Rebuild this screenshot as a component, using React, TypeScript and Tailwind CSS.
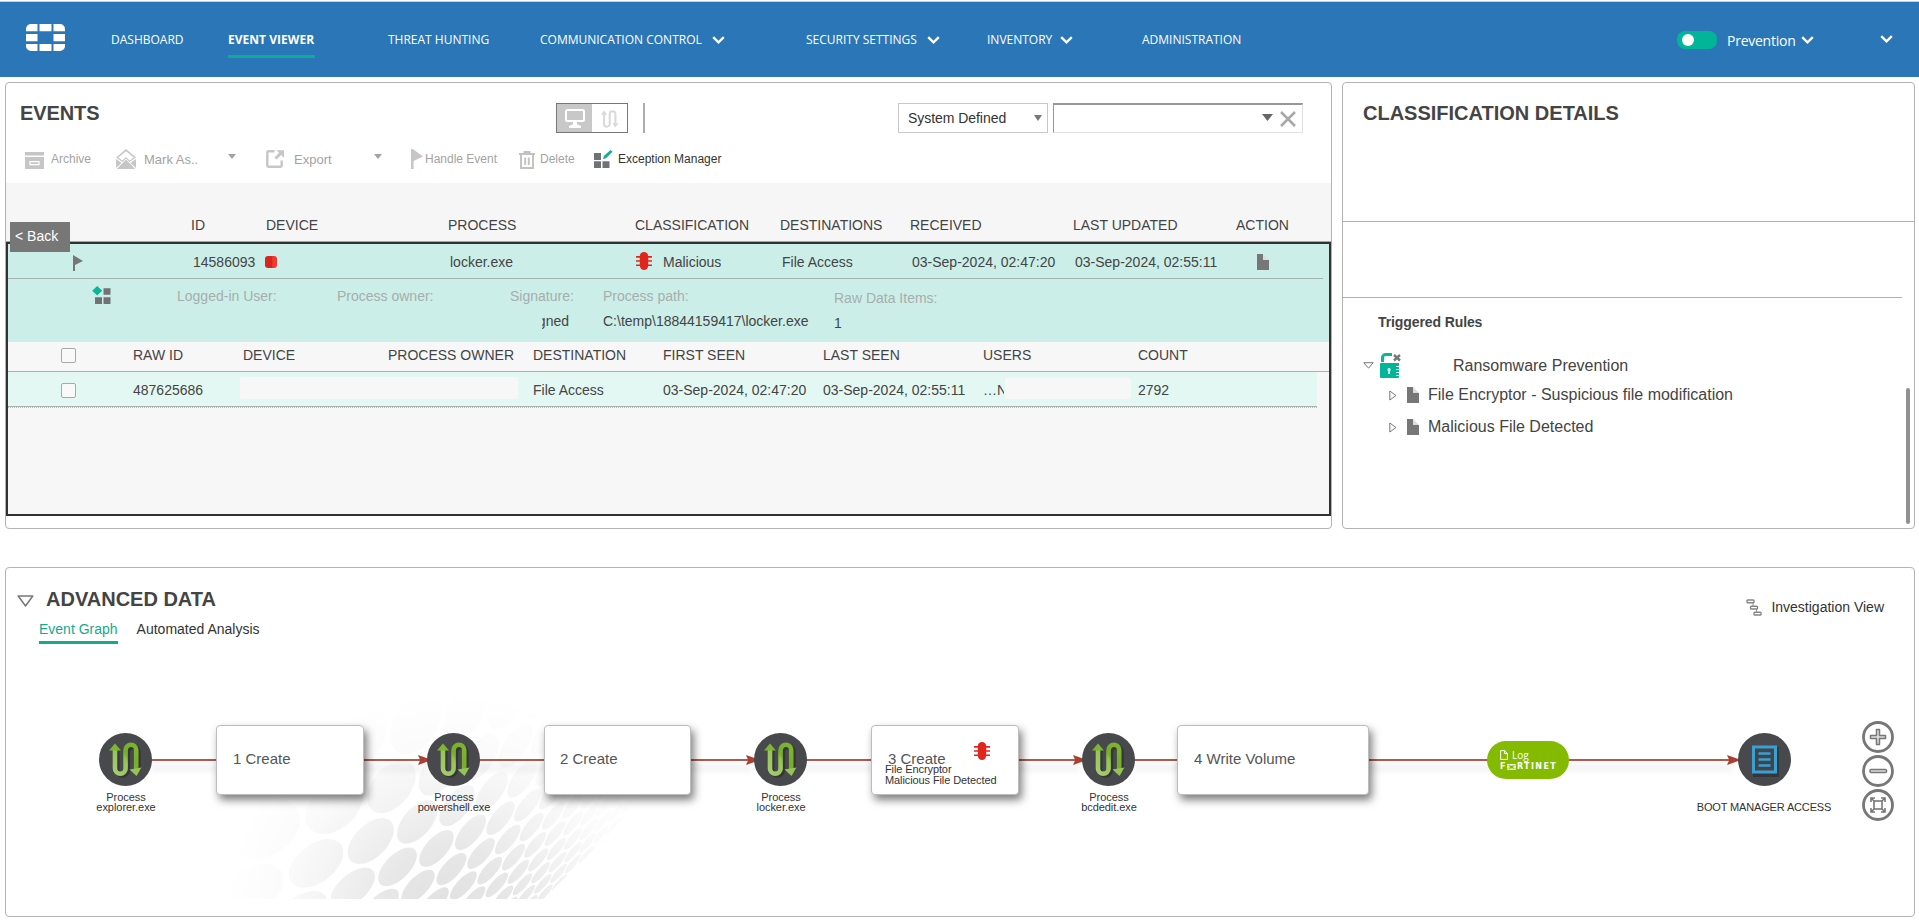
import React from "react";

const SANS = "font-['Liberation_Sans',sans-serif]";
const NAV = "font-['Open_Sans',sans-serif]";

function Logo({ className }: { className?: string }) {
  return (
    <svg viewBox="0 0 39 27" className={className} fill="currentColor" preserveAspectRatio="none">
      <path d="M5 0h6.500v7.300H0V5a5 5 0 0 1 5-5zM13.500 0h12v7.300h-12zM27.500 0H34a5 5 0 0 1 5 5v2.300H27.500zM0 10h11.500v7.300H0zM27.500 10H39v7.300H27.500zM0 20h11.500v7H5a5 5 0 0 1-5-5zM13.500 20h12v7h-12zM27.500 20H39v2a5 5 0 0 1-5 5h-6.500z" />
    </svg>
  );
}

function Chevron({ className = "h-[8px] w-[13px]" }: { className?: string }) {
  return (
    <svg viewBox="0 0 13 8" className={className} fill="none" stroke="#fff" strokeWidth="2.4">
      <path d="M1.2 1.2 6.5 6.3 11.8 1.2" />
    </svg>
  );
}

function Bug() {
  return (
    <svg viewBox="0 0 16 18" className="h-[18px] w-[16px]" fill="#e0261c">
      <rect x="3.8" y="0" width="8.4" height="18" rx="4.2" />
      <path d="M0 4h16v1.7H0zM0 8.2h16v1.6H0zM0 12.4h16v1.7H0z" />
    </svg>
  );
}

function Doc({ className = "h-[16px] w-[12px]" }: { className?: string }) {
  return (
    <svg viewBox="0 0 12 16" className={className}>
      <path d="M6 0 12 6H6z" fill="#dcdcdc" />
      <path d="M0 0h6v6h6v10H0z" fill="#777" />
    </svg>
  );
}

function CaretDown({ className }: { className?: string }) {
  return (
    <svg viewBox="0 0 8 6" className={className} fill="currentColor" preserveAspectRatio="none">
      <path d="M0 0h8L4 6z" />
    </svg>
  );
}

function Flow({ className, stroke = "#dadada" }: { className?: string; stroke?: string }) {
  return (
    <svg viewBox="9 9 35 35" className={className} preserveAspectRatio="none">
      <path d="M15 15V36a5.3 5.3 0 0 0 11 0V17a5.3 5.3 0 0 1 11 0V36" fill="none" stroke={stroke} strokeWidth="4" />
      <path d="M9 18 15 10 21 18zM31 35h12L37 43z" fill={stroke} />
    </svg>
  );
}

function NavItem({ label, chevron, ml }: { label: string; chevron?: boolean; ml?: string }) {
  return (
    <div className="flex items-center">
      <span className="whitespace-nowrap">{label}</span>
      {chevron && (
        <span className={ml}>
          <Chevron />
        </span>
      )}
    </div>
  );
}

function Header() {
  return (
    <header className={`h-[77px] border-t border-white ${NAV}`}>
      <div className="grid h-[76px] grid-cols-[26px_85px_117px_160px_152px_266px_181px_155px_535px_50px_153px_39px] items-center border-t border-[#bcd0e4] bg-[#2b76b7] text-[12px] text-white">
        <span />
        <Logo className="mb-[4px] h-[27px] w-[39px]" />
        <NavItem label="DASHBOARD" />
        <div className="relative flex h-full items-center font-bold">
          <span className="text-[12px] tracking-[0.03px] whitespace-nowrap">EVENT VIEWER</span>
          <span className="absolute top-[53px] left-0 h-[3px] w-[87px] bg-[#0bae94]" />
        </div>
        <NavItem label="THREAT HUNTING" />
        <NavItem label="COMMUNICATION CONTROL" chevron ml="ml-[10px]" />
        <NavItem label="SECURITY SETTINGS" chevron ml="ml-[10px]" />
        <NavItem label="INVENTORY" chevron ml="ml-[8px]" />
        <NavItem label="ADMINISTRATION" />
        <div className="flex h-[18px] w-[40px] items-center rounded-[8px] bg-[#02b598] pl-[5px]">
          <span className="size-[12px] rounded-full bg-white" />
        </div>
        <div className="flex items-center pt-[1px]">
          <span className="text-[14px] tracking-[-0.25px]">Prevention</span>
          <Chevron className="ml-[6px] h-[8px] w-[13px]" />
        </div>
        <Chevron className="mb-[2px] h-[8px] w-[13px]" />
      </div>
    </header>
  );
}

function Toolbar() {
  return (
    <div className="grid h-[50px] grid-cols-[18px_27px_65px_28px_84px_38px_28px_80px_37px_14px_94px_21px_54px_24px_auto] items-center pt-[2px] text-[12px] whitespace-nowrap text-[#a3a3a3]">
      <span />
      <svg viewBox="0 0 19 17" className="mt-[3px] ml-[1px] h-[17px] w-[19px]" fill="#c6c6c6">
        <path d="M0 0h19v3.5H0zM0 5h19v12H0z" />
        <path d="M5 9.7h9v3H5z" fill="none" stroke="#fff" strokeWidth="1.2" />
      </svg>
      <span>Archive</span>
      <svg viewBox="0 0 20 20" className="mb-[1px] h-[20px] w-[20px]">
        <path d="M0 8.500 10 0l10 8.500L13.500 13 10 9.500 6.500 13z" fill="#c6c6c6" />
        <path d="M2.200 8.600 10 2.200l7.800 6.400-4.200 3L10 8l-3.600 3.600z" fill="#fff" />
        <path d="M0 10 5.600 14 0 19zM20 10 14.400 14 20 19zM.8 20 10 10.500 19.200 20z" fill="#c6c6c6" />
      </svg>
      <span className="pt-[1px] text-[13px]">Mark As..</span>
      <CaretDown className="mb-[5px] h-[5px] w-[8px]" />
      <svg viewBox="0 0 18 18" className="h-[18px] w-[18px]" fill="none" stroke="#c6c6c6">
        <path d="M8.500 1.300H2.500a1.200 1.200 0 0 0-1.200 1.200v13a1.200 1.200 0 0 0 1.200 1.200h12a1.200 1.200 0 0 0 1.200-1.200V10.500" strokeWidth="2.4" />
        <path d="M9.500 8.500 14.500 3.500" strokeWidth="3" />
        <path d="M10.500.3H18V8z" fill="#c6c6c6" stroke="none" />
      </svg>
      <span className="pt-[1px] text-[13px]">Export</span>
      <CaretDown className="mb-[5px] h-[5px] w-[8px]" />
      <svg viewBox="0 0 12 20" className="mb-[1px] h-[20px] w-[12px]" fill="#c6c6c6">
        <path d="M0 0h1.8L12 7.5 2.6 12V20H0z" />
      </svg>
      <span>Handle Event</span>
      <svg viewBox="0 0 16 18" className="mt-[1px] h-[18px] w-[16px]" fill="none" stroke="#c2c2c2" strokeWidth="1.9">
        <path d="M0 3h16M5.5 2.5V1h5v1.5M2 3v14h12V3M6.2 6.5v7.5M9.8 6.5v7.5" />
      </svg>
      <span>Delete</span>
      <svg viewBox="0 0 19 18" className="h-[18px] w-[19px]">
        <path d="M0 3h7v7H0zM0 11.2h7V18H0zM8.5 11.2h7V18h-7z" fill="#717276" />
        <path d="M9 9.3 9.8 6 16.5 0 18.6 1.8 12.3 8z" fill="#12b095" />
      </svg>
      <span className="text-[#333]">Exception Manager</span>
    </div>
  );
}

function Checkbox() {
  return <span className="block size-[15px] rounded-[2px] border border-[#a8a8a8] bg-[#f9f9f9]" />;
}

function EventsPanel() {
  return (
    <section className="relative flex h-[447px] w-[1327px] shrink-0 flex-col rounded-[4px] border border-[#b3b3b3] bg-white">
      <div className="grid h-[50px] grid-cols-[14px_536px_87px_255px_155px_250px] items-start pt-[20px]">
        <span />
        <h1 className="text-[20px] leading-[20px] font-bold tracking-[-0.1px] text-[#444]">EVENTS</h1>
        <div className="flex h-[30px] w-[72px] border border-[#777]">
          <div className="flex w-[35px] items-center justify-center bg-[#c8c8c8]">
            <svg viewBox="0 0 20 19" className="h-[19px] w-[20px]">
              <rect x="1" y="1" width="18" height="11" rx="1.5" fill="none" stroke="#fff" strokeWidth="2" />
              <path d="M8 13h4v2.2l4 1.8v2H4v-2l4-1.8z" fill="#fff" />
            </svg>
          </div>
          <div className="flex flex-1 items-center justify-center pt-px">
            <Flow className="h-[18px] w-[18px]" />
          </div>
        </div>
        <span className="h-[30px] w-[2px] bg-[#adadad]" />
        <div className="flex h-[30px] w-[150px] items-center justify-between border border-[#c8c8c8] pr-[5px] pl-[9px] text-[14px] tracking-[-0.05px] text-[#333]">
          System Defined
          <CaretDown className="h-[6px] w-[8px] text-[#777]" />
        </div>
        <div className="flex h-[30px] w-[250px] items-center justify-end gap-[7px] border-t-2 border-r border-b border-l border-t-[#969696] border-r-[#e2e2e2] border-b-[#e2e2e2] border-l-[#969696] pr-[6px]">
          <CaretDown className="mb-[3px] h-[7px] w-[11px] text-[#666]" />
          <svg viewBox="0 0 16 16" className="h-[16px] w-[16px]" fill="none" stroke="#a8a8a8" strokeWidth="2.6">
            <path d="M1 1 15 15M15 1 1 15" />
          </svg>
        </div>
      </div>
      <Toolbar />
      <div className="grid h-[59px] grid-cols-[185px_75px_182px_187px_145px_130px_163px_163px_auto] border-b border-[#a5a5a5] bg-[#f6f6f6] pt-[34px] text-[14px] leading-[16px] text-[#444]">
        <span />
        <span>ID</span>
        <span>DEVICE</span>
        <span>PROCESS</span>
        <span>CLASSIFICATION</span>
        <span>DESTINATIONS</span>
        <span>RECEIVED</span>
        <span>LAST UPDATED</span>
        <span>ACTION</span>
      </div>
      <div className="h-[274px] border-2 border-[#323232] bg-[#f7f7f7] text-[14px] whitespace-nowrap text-[#444]">
        <div className="bg-[#cceee8]">
          <div className="mr-[6px] grid h-[35px] grid-cols-[65px_120px_73px_184px_186px_27px_119px_130px_163px_182px_auto] items-center border-b border-[#a7b5b2] pt-[2px]">
            <span />
            <svg viewBox="0 0 10 16" className="mt-[1px] h-[16px] w-[10px]" fill="#777">
              <path d="M0 0 10 6 2 10v6H0z" />
            </svg>
            <span>14586093</span>
            <span className="ml-[-1px] h-[12px] w-[12px] rounded-[3px] bg-linear-to-r from-[#d9251d] from-55% to-[#ee3a31] to-65%" />
            <span>locker.exe</span>
            <span className="-mt-[3px]">
              <Bug />
            </span>
            <span>Malicious</span>
            <span>File Access</span>
            <span>03-Sep-2024, 02:47:20</span>
            <span>03-Sep-2024, 02:55:11</span>
            <Doc />
          </div>
          <div className="grid h-[63px] grid-cols-[84px_85px_160px_173px_93px_231px_auto] leading-[25px]">
            <span />
            <svg viewBox="0 0 19 18" className="mt-[7px] h-[18px] w-[19px]">
              <path d="M11.500 2.200h7v6.600h-7zM3 11.200h7V18H3zM11.500 11.200h7V18h-7z" fill="#717276" />
              <path d="M5.2 0 10.2 4.8 5.2 9.6.2 4.8z" fill="#0bb596" />
            </svg>
            <span className="pt-[5px] text-[#a5aeac]">Logged-in User:</span>
            <span className="pt-[5px] text-[#a5aeac]">Process owner:</span>
            <div className="pt-[5px]">
              <div className="text-[#a5aeac]">Signature:</div>
              <div className="flex w-[59px] justify-end">
                <span className="flex w-[27px] justify-end overflow-hidden">gned</span>
              </div>
            </div>
            <div className="pt-[5px]">
              <div className="text-[#a5aeac]">Process path:</div>
              <div>C:\temp\18844159417\locker.exe</div>
            </div>
            <div className="pt-[7px]">
              <div className="text-[#a5aeac]">Raw Data Items:</div>
              <div>1</div>
            </div>
          </div>
        </div>
        <div className="grid h-[30px] grid-cols-[53px_72px_110px_145px_145px_130px_160px_160px_155px_auto] items-center border-b border-[#b0b0b0] pb-[3px]">
          <span />
          <Checkbox />
          <span>RAW ID</span>
          <span>DEVICE</span>
          <span>PROCESS OWNER</span>
          <span>DESTINATION</span>
          <span>FIRST SEEN</span>
          <span>LAST SEEN</span>
          <span>USERS</span>
          <span>COUNT</span>
        </div>
        <div className="h-[36px] w-[1309px] border-b border-dotted border-[#b5bfbc]">
          <div className="grid h-[35px] grid-cols-[53px_72px_107px_293px_130px_160px_160px_22px_133px_auto] items-center border-b border-[#a7b0ae] bg-[#e4f8f3] pt-[2px]">
            <span />
            <Checkbox />
            <span>487625686</span>
            <span className="mb-[5px] h-[22px] w-[278px] rounded-[2px] bg-[#f6f7f6]" />
            <span>File Access</span>
            <span>03-Sep-2024, 02:47:20</span>
            <span>03-Sep-2024, 02:55:11</span>
            <span className="w-[21px] overflow-hidden">…N</span>
            <span className="mb-[4px] h-[21px] w-[126px] rounded-[2px] bg-[#f6f7f6]" />
            <span>2792</span>
          </div>
        </div>
      </div>
      <button className="absolute top-[139px] left-[4px] h-[30px] w-[60px] bg-[#777] pb-[2px] pl-[5px] text-left text-[14px] text-white">&lt; Back</button>
    </section>
  );
}

function RightTriangle() {
  return (
    <svg viewBox="0 0 8 11" className="h-[11px] w-[8px]" fill="none" stroke="#777">
      <path d="M.8 1 7 5.5.8 10z" />
    </svg>
  );
}

function ClassificationPanel() {
  return (
    <section className="relative flex h-[447px] w-[573px] shrink-0 flex-col rounded-[4px] border border-[#b3b3b3] bg-white text-[#444]">
      <h1 className="h-[139px] border-b border-[#b0b0b0] pt-[20px] pl-[20px] text-[20px] leading-[20px] font-bold">CLASSIFICATION DETAILS</h1>
      <div className="mr-[12px] h-[76px] border-b border-[#b0b0b0]" />
      <h2 className="pt-[16px] pl-[35px] text-[14px] leading-[16px] font-bold tracking-[-0.1px]">Triggered Rules</h2>
      <div className="mt-[23px] grid grid-cols-[20px_17px_73px_auto] items-center text-[16px]">
        <span />
        <svg viewBox="0 0 11 7" className="h-[7px] w-[11px]" fill="none" stroke="#777">
          <path d="M.8.7h9.4L5.5 6.2z" />
        </svg>
        <svg viewBox="0 0 22 25" className="h-[25px] w-[22px]">
          <path d="M2.5 9V4.6a3 3 0 0 1 3-3H12" fill="none" stroke="#0bb596" strokeWidth="3" />
          <path d="M0 11a1 1 0 0 1 1-1h18v3h-3v1H19v2h-3v1h3v2h-3v1h3v2h-3v1H19v1a1 1 0 0 1-1 1H1a1 1 0 0 1-1-1z" fill="#02b598" />
          <path d="M14 2l6 5.500M20 2l-6 5.500" stroke="#777" strokeWidth="2.4" />
          <path d="M9 15a1.800 1.800 0 0 1 1 3.200V21H8.200V18.200A1.800 1.800 0 0 1 9 15z" fill="#e9fbf7" />
        </svg>
        <span>Ransomware Prevention</span>
      </div>
      <div className="pt-px">
        {["File Encryptor - Suspicious file modification", "Malicious File Detected"].map((rule) => (
          <div key={rule} className="grid h-[32px] grid-cols-[46px_18px_21px_auto] items-center text-[16px]">
            <span />
            <RightTriangle />
            <Doc />
            <span>{rule}</span>
          </div>
        ))}
      </div>
      <span className="absolute top-[305px] left-[563px] h-[136px] w-[4px] rounded-full bg-[#919194]" />
    </section>
  );
}

/* Perspective dot field: a unit grid projected onto a quadrilateral. */
function buildDots() {
  const [x0, y0, x1, y1, x2, y2, x3, y3] = [350, 420, 727, 293, 905, 538, 692, 650];
  const dx1 = x1 - x2;
  const dx2 = x3 - x2;
  const sx = x0 - x1 + x2 - x3;
  const dy1 = y1 - y2;
  const dy2 = y3 - y2;
  const sy = y0 - y1 + y2 - y3;
  const den = dx1 * dy2 - dx2 * dy1;
  const g = (sx * dy2 - dx2 * sy) / den;
  const h = (dx1 * sy - sx * dy1) / den;
  const project = (i: number, j: number) => {
    const s = (i - 1) / 2;
    const t = (j + 1) / 3;
    const w = 1 + g * s + h * t;
    return {
      w,
      x: ((x1 - x0 + g * x1) * s + (x3 - x0 + h * x3) * t + x0) / w,
      y: ((y1 - y0 + g * y1) * s + (y3 - y0 + h * y3) * t + y0) / w,
    };
  };
  const out: string[] = [];
  for (let i = -2; i <= 40; i++) {
    for (let j = -3; j <= 40; j++) {
      const c = project(i, j);
      if (c.w <= 0.1 || c.x < 0 || c.x > 1450 || c.y < -20 || c.y > 720) continue;
      const pts: string[] = [];
      for (let k = 0; k < 28; k++) {
        const a = (k / 28) * Math.PI * 2;
        const u = 0.56 * Math.cos(a) - 0.11 * Math.sin(a);
        const v = -0.2 * Math.cos(a) + 0.43 * Math.sin(a);
        const p = project(i + u, j + v);
        pts.push(`${p.x.toFixed(1)} ${p.y.toFixed(1)}`);
      }
      out.push(`M${pts.join("L")}Z`);
    }
  }
  return out.join("");
}

const DOTS = buildDots();

function DotField() {
  return (
    <svg viewBox="0 0 1500 627" className="absolute top-[122px] left-[144px] h-[209px] w-[500px]">
      <defs>
        <radialGradient id="fade" gradientUnits="userSpaceOnUse" cx="900" cy="680" r="680">
          <stop offset="0" stopColor="#fff" />
          <stop offset=".3" stopColor="#c4c4c4" />
          <stop offset=".55" stopColor="#626262" />
          <stop offset=".75" stopColor="#222" />
          <stop offset="1" stopColor="#000" />
        </radialGradient>
        <mask id="dotmask">
          <path d="M0 0H1500V300L1340 470 1180 627H0z" fill="url(#fade)" />
        </mask>
      </defs>
      <path d={DOTS} fill="#e0e0e0" mask="url(#dotmask)" />
    </svg>
  );
}

function ProcessIcon() {
  return (
    <svg viewBox="0 0 53 53" className="-ml-[2px] size-[53px]">
      <defs>
        <linearGradient id="green" x1="0" x2="1" y1="1" y2="0">
          <stop offset="0" stopColor="#a4cc6c" />
          <stop offset=".48" stopColor="#97c356" />
          <stop offset=".6" stopColor="#76ae2a" />
          <stop offset="1" stopColor="#7db52e" />
        </linearGradient>
      </defs>
      <circle cx="26.5" cy="26.5" r="26.5" fill="#48494d" />
      <path d="M18 17V37a5.3 5.3 0 0 0 10.6 0V19a5.3 5.3 0 0 1 10.6 0V38" fill="none" stroke="#35363a" strokeWidth="5" />
      <path d="M16 15V35.5a5.3 5.3 0 0 0 10.6 0V17a5.3 5.3 0 0 1 10.6 0V37" fill="none" stroke="url(#green)" strokeWidth="4.6" />
      <path d="M10 17.5 16 10.5 22 17.500z" fill="#7db52e" />
      <path d="M30.5 36.5 37.5 43 42.5 34.500z" fill="#97c356" />
    </svg>
  );
}

function ProcessNode({ pos, name }: { pos: string; name: string }) {
  return (
    <div className={`absolute top-[165px] flex w-[120px] flex-col items-center ${pos}`}>
      <ProcessIcon />
      <div className="mt-[6px] text-center text-[11px] leading-[10px] tracking-[-0.05px] text-[#333]">
        Process
        <br />
        {name}
      </div>
    </div>
  );
}

function StepBox({ pos, children }: { pos: string; children: React.ReactNode }) {
  return (
    <div className={`absolute top-[157px] h-[70px] rounded-[4px] border border-[#bdbdbd] bg-white text-[15px] text-[#555] shadow-[3px_5px_8px_rgba(0,0,0,0.5)] ${pos}`}>
      {children}
    </div>
  );
}

function Edge({ pos, arrow }: { pos: string; arrow?: boolean }) {
  return (
    <div className={`absolute top-[186px] flex h-[12px] items-center ${pos}`}>
      <span className="h-[2px] flex-1 bg-[#b0594e] shadow-[0_8px_6px_2px_rgba(60,60,90,0.08)]" />
      {arrow && (
        <svg viewBox="0 0 12 10" className="-ml-[4px] h-[10px] w-[12px]" fill="#ab4030">
          <path d="M0 0 12 4.2V5.800L0 10 2.2 5z" />
        </svg>
      )}
    </div>
  );
}

function ZoomButton({ children }: { children: React.ReactNode }) {
  return (
    <svg viewBox="0 0 32 32" className="size-[32px]" fill="none" stroke="#777">
      <circle cx="16" cy="16" r="14.5" strokeWidth="2.8" />
      {children}
    </svg>
  );
}

function AdvancedPanel() {
  return (
    <section className="relative mt-[38px] h-[350px] w-[1910px] rounded-[4px] border border-[#b3b3b3] bg-white">
      <div className="flex items-start justify-between">
        <div>
          <div className="flex items-center pt-[21px] pl-[11px]">
            <svg viewBox="0 0 17 12" className="mt-[4px] h-[12px] w-[17px]" fill="none" stroke="#777" strokeWidth="1.5">
              <path d="M1.2 1h14.6L8.5 11z" strokeLinejoin="round" />
            </svg>
            <h1 className="ml-[12px] text-[20px] leading-[20px] font-bold text-[#444]">ADVANCED DATA</h1>
          </div>
          <div className="flex gap-[19px] pt-[12px] pl-[33px] text-[14px] leading-[16px] text-[#333]">
            <span className="h-[23px] border-b-[3px] border-[#16a98e] text-[#16a98e]">Event Graph</span>
            <span>Automated Analysis</span>
          </div>
        </div>
        <div className="flex items-center gap-[9px] pt-[30px] pr-[30px] text-[14px] leading-[16px] text-[#333]">
          <svg viewBox="0 0 16 17" className="mt-[1px] h-[17px] w-[16px]" fill="none" stroke="#858585" strokeWidth="1.4">
            <rect x="1" y="1" width="7" height="2.8" rx=".8" />
            <rect x="4.5" y="7.2" width="7" height="2.8" rx=".8" />
            <rect x="8" y="13.2" width="7" height="2.8" rx=".8" />
            <path d="M7 4v3M10.5 10v3" strokeWidth=".8" />
          </svg>
          Investigation View
        </div>
      </div>

      <DotField />

      <Edge pos="left-[146px] w-[64px]" />
      <Edge pos="left-[357px] w-[67px]" arrow />
      <Edge pos="left-[473px] w-[65px]" />
      <Edge pos="left-[685px] w-[67px]" arrow />
      <Edge pos="left-[800px] w-[65px]" />
      <Edge pos="left-[1012px] w-[67px]" arrow />
      <Edge pos="left-[1128px] w-[43px]" />
      <Edge pos="left-[1361px] w-[122px]" />
      <Edge pos="left-[1560px] w-[173px]" arrow />

      <ProcessNode pos="left-[60px]" name="explorer.exe" />
      <ProcessNode pos="left-[388px]" name="powershell.exe" />
      <ProcessNode pos="left-[715px]" name="locker.exe" />
      <ProcessNode pos="left-[1043px]" name="bcdedit.exe" />

      <StepBox pos="left-[210px] w-[148px] pl-[16px] leading-[66px]">1 Create</StepBox>
      <StepBox pos="left-[538px] w-[147px] pl-[15px] leading-[66px]">2 Create</StepBox>
      <StepBox pos="left-[865px] w-[148px]">
        <div className="pl-[16px] leading-[66px]">3 Create</div>
        <div className="absolute top-[16px] left-[102px]">
          <Bug />
        </div>
        <div className="absolute top-[38px] left-[13px] text-[11px] leading-[11px] tracking-[-0.1px] whitespace-nowrap text-[#333]">
          File Encryptor
          <br />
          Malicious File Detected
        </div>
      </StepBox>
      <StepBox pos="left-[1171px] w-[192px] pl-[16px] leading-[66px]">4 Write Volume</StepBox>

      <div className="absolute top-[173px] left-[1481px] flex h-[38px] w-[82px] flex-col rounded-full bg-[#84bb00] pt-[7px] pl-[13px] text-white">
        <div className={`flex h-[13px] items-center gap-[4px] text-[10px] leading-[12px] ${NAV}`}>
          <svg viewBox="0 0 8 10" className="h-[10px] w-[8px]" fill="none" stroke="#fff">
            <path d="M.6.6h4L7.4 3.5v5.9H.6zM4.6.6v3h2.8" />
          </svg>
          Log
        </div>
        <div className="mt-[2px] flex items-center font-['DejaVu_Sans',sans-serif] text-[8px] leading-[8px] font-bold tracking-[1.4px]">
          F<Logo className="mr-[1px] h-[6px] w-[9px]" />
          RTINET
        </div>
      </div>

      <div className="absolute top-[165px] left-[1678px] flex w-[160px] flex-col items-center">
        <svg viewBox="0 0 53 53" className="size-[53px]">
          <circle cx="26.5" cy="26.5" r="26.5" fill="#48494d" />
          <rect x="17" y="16" width="22" height="26" fill="none" stroke="#35363a" strokeWidth="4" />
          <rect x="15.5" y="14" width="22" height="25" fill="#414549" stroke="#3a9fd2" strokeWidth="3" />
          <path d="M20.5 20.5h12M20.5 26.5h12M20.5 32.5h12" stroke="#3a9fd2" strokeWidth="2.6" />
        </svg>
        <span className="mt-[15px] text-[11px] leading-[12px] tracking-[-0.15px] whitespace-nowrap text-[#333]">BOOT MANAGER ACCESS</span>
      </div>

      <div className="absolute top-[153px] left-[1856px] flex flex-col gap-[2px]">
        <ZoomButton>
          <path d="M14.5 8.5h3v6h6v3h-6v6h-3v-6h-6v-3h6z" fill="#ddd" strokeWidth="1.5" strokeLinejoin="round" />
        </ZoomButton>
        <ZoomButton>
          <rect x="8" y="14.5" width="16.5" height="3" rx="1" fill="#ddd" strokeWidth="1.5" />
        </ZoomButton>
        <ZoomButton>
          <rect x="12" y="12" width="8" height="8" strokeWidth="1.6" />
          <path d="M9 13V9h4M19 9h4v4M23 19v4h-4M13 23H9v-4M9 9l3 3M23 9l-3 3M23 23l-3-3M9 23l3-3" strokeWidth="1.6" />
        </ZoomButton>
      </div>
    </section>
  );
}

export default function App() {
  return (
    <div className={`h-[920px] w-[1919px] overflow-hidden bg-white ${SANS}`}>
      <Header />
      <main className="pt-[5px] pl-[5px]">
        <div className="flex gap-[10px]">
          <EventsPanel />
          <ClassificationPanel />
        </div>
        <AdvancedPanel />
      </main>
    </div>
  );
}
